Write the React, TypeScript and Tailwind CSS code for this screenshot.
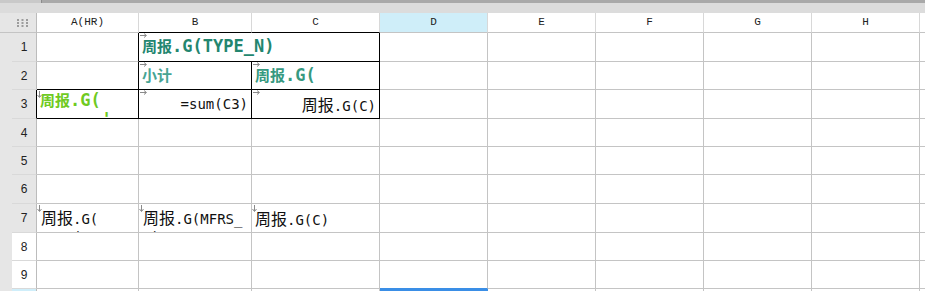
import React from "react";

function Runs({ s, cjk }: { s: string; cjk: string }) {
  const parts = s.split(/([\u4e00-\u9fff]+)/).filter((p) => p.length > 0);
  return (
    <>
      {parts.map((p, i) =>
        /[\u4e00-\u9fff]/.test(p) ? (
          <span key={i} className={cjk}>
            {p}
          </span>
        ) : (
          <span key={i}>{p}</span>
        )
      )}
    </>
  );
}

function ArrowR() {
  return (
    <svg className="absolute left-[1px] top-[0px]" width="8" height="5" viewBox="0 0 8 5">
      <path d="M0 2.5H6M4 0.5L6.5 2.5L4 4.5" stroke="#8a8a8a" strokeWidth="1" fill="none" />
    </svg>
  );
}

function ArrowD() {
  return (
    <svg className="absolute left-[0px] top-[1px]" width="5" height="8" viewBox="0 0 5 8">
      <path d="M2.5 0V6M0.5 4L2.5 6.5L4.5 4" stroke="#8a8a8a" strokeWidth="1" fill="none" />
    </svg>
  );
}

const bold = "font-['DejaVu_Sans_Mono','Noto_Sans_CJK_SC',monospace] font-bold text-[17px]";
const boldCjk = "font-['Noto_Sans_CJK_SC',sans-serif] text-[15px]";
const reg = "font-['DejaVu_Sans_Mono','Noto_Sans_CJK_SC',monospace] text-[14px] text-[#111]";
const regCjk = "font-['Noto_Sans_CJK_SC',sans-serif] text-[16px]";

function HeadCell({ label, cls }: { label: string; cls?: string }) {
  return (
    <div
      className={`flex items-center justify-center border-r border-b border-r-[#d8d8d8] font-['Liberation_Mono',monospace] text-[11px] text-[#222] ${
        cls ?? "bg-white border-b-[#c4c4c4]"
      }`}
    >
      {label}
    </div>
  );
}

function RowNum({ n, cls }: { n: number; cls?: string }) {
  return (
    <div
      className={`flex items-center justify-center border-r border-b border-b-[#d9d9d9] font-['Liberation_Sans',sans-serif] text-[12px] text-[#222] ${
        cls ?? "bg-[#e6e6e6] border-r-[#bcbcbc]"
      }`}
    >
      {n}
    </div>
  );
}

function Blank({ cls }: { cls?: string }) {
  return <div className={`bg-white border-r border-b ${cls ?? "border-r-[#c4c4c4] border-b-[#c4c4c4]"}`} />;
}

export default function App() {
  return (
    <div className="w-[925px] h-[291px] overflow-hidden bg-white flex flex-col">
      <div className="flex h-[3px] shrink-0">
        <div className="w-[41px] bg-[#c9c9c9]" />
        <div className="w-[1px] bg-[#8c8c8c]" />
        <div className="flex-1 bg-[#a9a9a9]" />
      </div>
      <div className="h-[10px] shrink-0 bg-[#dcdcdc]" />
      <div className="grid grid-cols-[12px_25px_102px_113px_128px_108px_108px_108px_108px_108px_1fr] grid-rows-[20px_29px_28px_29px_28px_28px_29px_29px_28px_28px_3px]">
        {/* header row */}
        <div className="col-span-2 flex items-center justify-center pl-[8px] bg-[#e6e6e6] border-r border-b border-r-[#bcbcbc] border-b-[#c4c4c4]">
          <svg width="11" height="8" viewBox="0 0 11 8">
            {[0, 4.5, 9].map((x) =>
              [0, 3, 6].map((y) => <rect key={`${x}-${y}`} x={x} y={y} width="2" height="2" fill="#9c9c9c" />)
            )}
          </svg>
        </div>
        <HeadCell label="A(HR)" />
        <HeadCell label="B" cls="bg-white border-b-black" />
        <HeadCell label="C" cls="bg-white border-b-black" />
        <HeadCell label="D" cls="bg-[#cfeef9] border-b-[#c4c4c4]" />
        <HeadCell label="E" />
        <HeadCell label="F" />
        <HeadCell label="G" />
        <HeadCell label="H" />
        <div className="bg-white border-b border-b-[#c4c4c4]" />

        {/* left strip */}
        <div className="row-span-10 bg-[#e6e6e6]" />

        {/* row 1 */}
        <RowNum n={1} />
        <Blank cls="border-r-black border-b-[#c4c4c4]" />
        <div className="col-span-2 relative flex items-center pl-[3px] bg-white border-r border-b border-r-black border-b-black">
          <ArrowR />
          <span className={`${bold} text-[#23866f] whitespace-nowrap`}>
            <Runs s="周报.G(TYPE_N)" cjk={boldCjk} />
          </span>
        </div>
        <Blank />
        <Blank />
        <Blank />
        <Blank />
        <Blank />
        <div className="bg-white border-b border-b-[#c4c4c4]" />

        {/* row 2 */}
        <RowNum n={2} />
        <Blank cls="border-r-black border-b-black" />
        <div className="relative flex items-center pl-[3px] bg-white border-r border-b border-r-black border-b-black">
          <ArrowR />
          <span className={`${bold} text-[#47a493] whitespace-nowrap`}>
            <Runs s="小计" cjk={boldCjk} />
          </span>
        </div>
        <div className="relative flex items-center pl-[3px] bg-white border-r border-b border-r-black border-b-black overflow-hidden">
          <ArrowR />
          <span className={`${bold} text-[#36997f] whitespace-nowrap`}>
            <Runs s="周报.G(" cjk={boldCjk} />
          </span>
        </div>
        <Blank />
        <Blank />
        <Blank />
        <Blank />
        <Blank />
        <div className="bg-white border-b border-b-[#c4c4c4]" />

        {/* row 3 */}
        <RowNum n={3} cls="bg-[#e6e6e6] border-r-black" />
        <div className="relative overflow-hidden pl-[3px] bg-white border-r border-b border-r-black border-b-black">
          <ArrowD />
          <div className={`${bold} text-[#6fca22] leading-[19px] whitespace-nowrap`}>
            <div>
              <Runs s="周报.G(" cjk={boldCjk} />
            </div>
            <div>{"\u00a0\u00a0\u00a0\u00a0\u00a0\u00a0'"}</div>
          </div>
        </div>
        <div className="relative flex items-center justify-end pr-[3px] bg-white border-r border-b border-r-black border-b-black">
          <ArrowR />
          <span className={`${reg} whitespace-nowrap`}>=sum(C3)</span>
        </div>
        <div className="relative flex items-center justify-end pr-[3px] bg-white border-r border-b border-r-black border-b-black">
          <ArrowR />
          <span className={`${reg} whitespace-nowrap`}>
            <Runs s="周报.G(C)" cjk={regCjk} />
          </span>
        </div>
        <Blank />
        <Blank />
        <Blank />
        <Blank />
        <Blank />
        <div className="bg-white border-b border-b-[#c4c4c4]" />

        {/* rows 4-6 */}
        {[4, 5, 6].map((n) => (
          <React.Fragment key={n}>
            <RowNum n={n} />
            {Array.from({ length: 8 }).map((_, i) => (
              <Blank key={i} />
            ))}
            <div className="bg-white border-b border-b-[#c4c4c4]" />
          </React.Fragment>
        ))}

        {/* row 7 */}
        <RowNum n={7} />
        <div className="relative overflow-hidden pl-[4px] pt-[4px] bg-white border-r border-b border-r-[#c4c4c4] border-b-[#c4c4c4]">
          <ArrowD />
          <div className={`${reg} leading-[18px] whitespace-nowrap`}>
            <div>
              <Runs s="周报.G(" cjk={regCjk} />
            </div>
            <div>DEPT)</div>
          </div>
        </div>
        <div className="relative overflow-hidden pl-[4px] pt-[4px] bg-white border-r border-b border-r-[#c4c4c4] border-b-[#c4c4c4]">
          <ArrowD />
          <div className={`${reg} leading-[18px] whitespace-nowrap`}>
            <div>
              <Runs s="周报.G(MFRS_" cjk={regCjk} />
            </div>
            <div>N)</div>
          </div>
        </div>
        <div className="relative overflow-hidden flex items-center pl-[3px] bg-white border-r border-b border-r-[#c4c4c4] border-b-[#c4c4c4]">
          <ArrowD />
          <span className={`${reg} whitespace-nowrap`}>
            <Runs s="周报.G(C)" cjk={regCjk} />
          </span>
        </div>
        <Blank />
        <Blank />
        <Blank />
        <Blank />
        <Blank />
        <div className="bg-white border-b border-b-[#c4c4c4]" />

        {/* rows 8-9 */}
        {[8, 9].map((n) => (
          <React.Fragment key={n}>
            <RowNum n={n} cls="bg-white border-r-[#bcbcbc]" />
            <Blank />
            <Blank />
            <Blank />
            <Blank cls={n === 9 ? "border-r-[#c4c4c4] border-b-[#3a8ee6]" : undefined} />
            <Blank />
            <Blank />
            <Blank />
            <Blank />
            <div className="bg-white border-b border-b-[#c4c4c4]" />
          </React.Fragment>
        ))}

        {/* row 10 (partial) */}
        <div className="bg-[#cfeefa] border-r border-r-[#bcbcbc]" />
        <Blank cls="border-r-[#c4c4c4]" />
        <Blank cls="border-r-[#c4c4c4]" />
        <Blank cls="border-r-[#c4c4c4]" />
        <div className="bg-[#3a8ee6]" />
        <Blank cls="border-r-[#c4c4c4]" />
        <Blank cls="border-r-[#c4c4c4]" />
        <Blank cls="border-r-[#c4c4c4]" />
        <Blank cls="border-r-[#c4c4c4]" />
        <div className="bg-white" />
      </div>
    </div>
  );
}
